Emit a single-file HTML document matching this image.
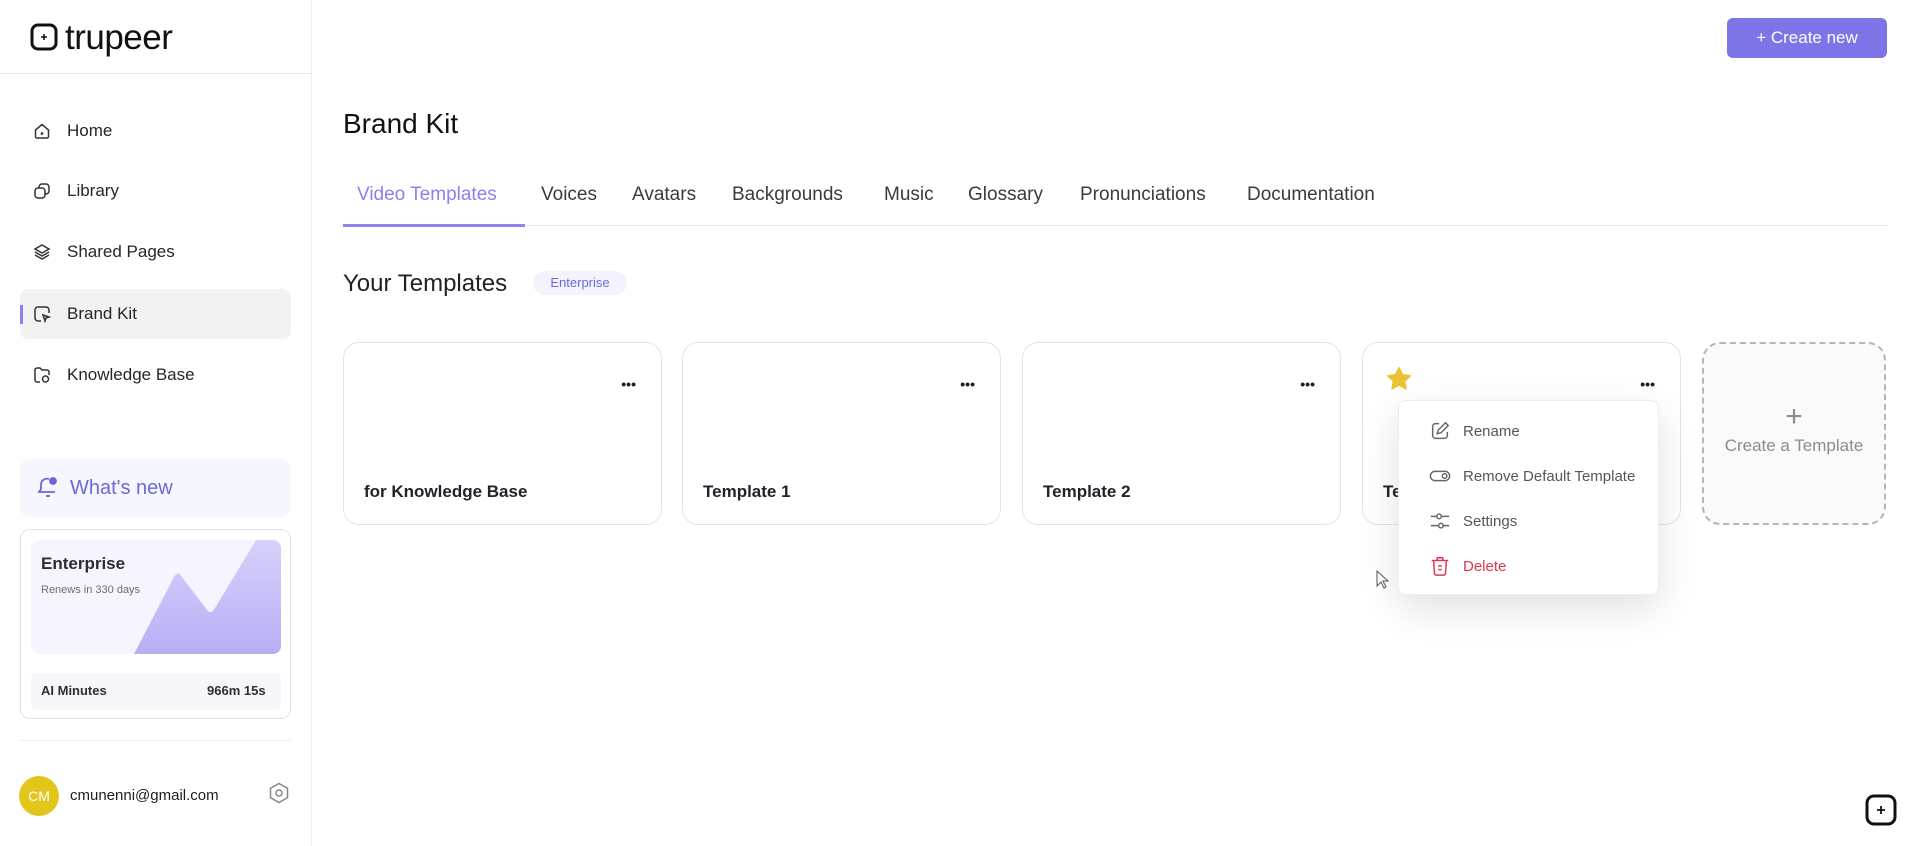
<!DOCTYPE html>
<html><head><meta charset="utf-8"><style>
*{box-sizing:border-box;margin:0;padding:0}
body{width:1920px;height:846px;overflow:hidden;background:#fff;font-family:"Liberation Sans",sans-serif;color:#1d1d22;position:relative}
.abs{position:absolute}
.side{position:absolute;left:0;top:0;width:312px;height:846px;border-right:1px solid #ececef}
.nav{position:absolute;left:20px;width:271px;height:50px;display:flex;align-items:center;font-size:17px;color:#25252b}
.nav svg{position:absolute;left:13px}
.nav span{position:absolute;left:47px}
.tab{position:absolute;top:184px;font-size:19px;color:#3a3a42}
.card{position:absolute;top:342px;width:319px;height:183px;border:1px solid #e4e4e8;border-radius:16px;background:#fff}
.card .t{position:absolute;left:20px;top:139px;font-size:17px;font-weight:bold;color:#22222a}
.dots{position:absolute;right:25px;top:36px;font-size:14px;font-weight:bold;letter-spacing:0px;line-height:10px}
.mi{position:absolute;left:30px;display:flex;align-items:center;font-size:15px;color:#55555c}
.mi svg{margin-right:12px}
</style></head><body>
<div class="side">
 <div class="abs" style="left:0;top:73px;width:312px;height:1px;background:#e8e8eb"></div>
 <svg class="abs" style="left:30px;top:23px" width="28" height="28" viewBox="0 0 28 28"><rect x="2" y="2" width="24" height="24" rx="6" fill="none" stroke="#111" stroke-width="3"/><path d="M14 11v6M11 14h6" stroke="#111" stroke-width="1.6"/></svg>
 <div class="abs" style="left:65px;top:18px;font-size:35px;letter-spacing:-0.5px;color:#111">trupeer</div>
 <div class="nav" style="top:106px"><svg width="18" height="18" viewBox="0 0 18 18" fill="none" stroke="#333" stroke-width="1.5"><path d="M2.5 8L9 2.5 15.5 8v6.5a1.5 1.5 0 0 1-1.5 1.5H4a1.5 1.5 0 0 1-1.5-1.5z"/><circle cx="9" cy="11.5" r=".6" fill="#333"/></svg><span>Home</span></div>
 <div class="nav" style="top:166px"><svg width="18" height="18" viewBox="0 0 18 18" fill="none" stroke="#333" stroke-width="1.5"><rect x="2" y="6" width="10" height="10" rx="3"/><path d="M6 6V5a3 3 0 0 1 3-3h4a3 3 0 0 1 3 3v4a3 3 0 0 1-3 3h-1"/></svg><span>Library</span></div>
 <div class="nav" style="top:227px"><svg width="18" height="18" viewBox="0 0 18 18" fill="none" stroke="#333" stroke-width="1.5"><path d="M9 2L16 6 9 10 2 6z"/><path d="M2 9l7 4 7-4M2 12l7 4 7-4"/></svg><span>Shared Pages</span></div>
 <div class="nav" style="top:289px;background:#f2f2f3;border-radius:8px"><div class="abs" style="left:0;top:16px;width:3px;height:19px;background:#8b80f0"></div><svg width="18" height="18" viewBox="0 0 18 18" fill="none" stroke="#333" stroke-width="1.5"><path d="M16 8V5a3 3 0 0 0-3-3H5a3 3 0 0 0-3 3v8a3 3 0 0 0 3 3h3"/><path d="M10 10l6 2-3 1-1 3z"/></svg><span>Brand Kit</span></div>
 <div class="nav" style="top:350px"><svg width="18" height="18" viewBox="0 0 18 18" fill="none" stroke="#333" stroke-width="1.5"><path d="M7 16H4a2 2 0 0 1-2-2V4a2 2 0 0 1 2-2h3l2 2h5a2 2 0 0 1 2 2v3"/><circle cx="12.5" cy="13" r="3"/></svg><span>Knowledge Base</span></div>
 <div class="abs" style="left:20px;top:459px;width:271px;height:58px;background:#f6f6fe;border-radius:10px"></div>
 <svg class="abs" style="left:36px;top:475px" width="24" height="24" viewBox="0 0 24 24" fill="none" stroke="#6a68d8" stroke-width="1.8"><path d="M13 4a6 6 0 0 0-8 6v4l-2 3h16"/><path d="M10 21h4"/><circle cx="17" cy="6" r="3" fill="#6a68d8"/></svg>
 <div class="abs" style="left:70px;top:477px;font-size:20px;color:#6b69d9">What's new</div>
 <div class="abs" style="left:20px;top:529px;width:271px;height:190px;border:1px solid #e2e2e6;border-radius:10px"></div>
 <div class="abs" style="left:31px;top:540px;width:250px;height:114px;background:#f6f5ff;border-radius:8px;overflow:hidden">
  <svg class="abs" style="left:0;top:0" width="250" height="114" viewBox="0 0 250 114"><defs><linearGradient id="g" x1="0" y1="0" x2="0" y2="1"><stop offset="0" stop-color="#d6d1fb"/><stop offset="1" stop-color="#b7aff5"/></linearGradient></defs><path d="M103 114L143 37Q147 30 151 37L176 70Q180 75 184 68L225 0H250V114Z" fill="url(#g)"/></svg>
  <div class="abs" style="left:10px;top:14px;font-size:17px;font-weight:bold;color:#2d2d36">Enterprise</div>
  <div class="abs" style="left:10px;top:44px;font-size:11px;color:#6b6b74">Renews in 330 days</div>
 </div>
 <div class="abs" style="left:31px;top:673px;width:250px;height:37px;background:#f6f6fb;border-radius:6px"></div>
 <div class="abs" style="left:41px;top:683px;font-size:13px;font-weight:bold;color:#2d2d36">AI Minutes</div>
 <div class="abs" style="left:207px;top:683px;font-size:13px;font-weight:bold;color:#2d2d36">966m 15s</div>
 <div class="abs" style="left:20px;top:740px;width:271px;height:1px;background:#ededf0"></div>
 <div class="abs" style="left:19px;top:776px;width:40px;height:40px;border-radius:50%;background:#e3c61c;color:#fff;font-size:14px;line-height:40px;text-align:center">CM</div>
 <div class="abs" style="left:70px;top:787px;font-size:15px;color:#1d1d22">cmunenni@gmail.com</div>
 <svg class="abs" style="left:267px;top:781px" width="24" height="24" viewBox="0 0 24 24" fill="none" stroke="#888" stroke-width="1.5"><path d="M12 2.5l8.5 4.8v9.4L12 21.5l-8.5-4.8V7.3z"/><circle cx="12" cy="12" r="3"/></svg>
</div>

<div class="abs" style="left:1727px;top:18px;width:160px;height:40px;background:#7d74e8;border-radius:6px;color:#fff;font-size:17px;line-height:40px;text-align:center">+ Create new</div>
<div class="abs" style="left:343px;top:108px;font-size:28px;color:#111">Brand Kit</div>
<div class="tab" style="left:357px;color:#8a80ef">Video Templates</div>
<div class="tab" style="left:541px">Voices</div>
<div class="tab" style="left:632px">Avatars</div>
<div class="tab" style="left:732px">Backgrounds</div>
<div class="tab" style="left:884px">Music</div>
<div class="tab" style="left:968px">Glossary</div>
<div class="tab" style="left:1080px">Pronunciations</div>
<div class="tab" style="left:1247px">Documentation</div>
<div class="abs" style="left:343px;top:225px;width:1544px;height:1px;background:#e8e8eb"></div>
<div class="abs" style="left:343px;top:224px;width:182px;height:3px;background:#8f85f0"></div>
<div class="abs" style="left:343px;top:270px;font-size:24px;color:#222">Your Templates</div>
<div class="abs" style="left:533px;top:271px;width:94px;height:24px;background:#f4f3fd;border-radius:12px;color:#6b6adb;font-size:13px;line-height:24px;text-align:center">Enterprise</div>

<div class="card" style="left:343px"><div class="dots">•••</div><div class="t">for Knowledge Base</div></div>
<div class="card" style="left:682px"><div class="dots">•••</div><div class="t">Template 1</div></div>
<div class="card" style="left:1022px"><div class="dots">•••</div><div class="t">Template 2</div></div>
<div class="card" style="left:1362px"><div class="dots">•••</div><div class="t">Template 3</div>
 <svg class="abs" style="left:22px;top:22px" width="28" height="28" viewBox="0 0 24 24"><path d="M12 2.5l2.9 6 6.6.8-4.9 4.5 1.3 6.5L12 17l-5.9 3.3 1.3-6.5L2.5 9.3l6.6-.8z" fill="#ecc232" stroke="#ecc232" stroke-linejoin="round" stroke-width="1.5"/></svg>
</div>
<div class="abs" style="left:1702px;top:342px;width:184px;height:183px;border:2px dashed #b5b5ba;border-radius:18px;background:#fafafa;text-align:center;color:#8b8b92">
 <div style="font-size:30px;margin-top:56px;font-weight:300">+</div>
 <div style="font-size:17px;margin-top:2px">Create a Template</div>
</div>

<div class="abs" style="left:1398px;top:400px;width:261px;height:195px;background:#fff;border:1px solid #ededf0;border-radius:8px;box-shadow:0 14px 40px rgba(0,0,0,.12)">
 <div class="mi" style="top:19px"><svg width="22" height="22" viewBox="0 0 24 24" fill="none" stroke="#666" stroke-width="1.6"><path d="M11 4H7a3 3 0 0 0-3 3v10a3 3 0 0 0 3 3h10a3 3 0 0 0 3-3v-4"/><path d="M18 3l3 3-8 8-4 1 1-4z"/></svg>Rename</div>
 <div class="mi" style="top:64px"><svg width="22" height="22" viewBox="0 0 24 24" fill="none" stroke="#666" stroke-width="1.6"><rect x="1.5" y="7" width="21" height="10" rx="5"/><circle cx="17" cy="12" r="2.5"/></svg>Remove Default Template</div>
 <div class="mi" style="top:109px"><svg width="22" height="22" viewBox="0 0 24 24" fill="none" stroke="#666" stroke-width="1.6"><path d="M2 7h6M14 7h8M2 17h8M16 17h6"/><circle cx="11" cy="7" r="2.5"/><circle cx="13" cy="17" r="2.5"/></svg>Settings</div>
 <div class="mi" style="top:154px;color:#e0354e"><svg width="22" height="22" viewBox="0 0 24 24" fill="none" stroke="#e0354e" stroke-width="1.6"><path d="M3 6h18M9 6V3h6v3M5 6l1 14a2 2 0 0 0 2 2h8a2 2 0 0 0 2-2l1-14M10 12h4M10 16h4"/></svg>Delete</div>
</div>
<svg class="abs" style="left:1376px;top:570px" width="14" height="20" viewBox="0 0 14 20"><path d="M1 1v15l4-4 3 6 2-1-3-6h5z" fill="#fff" stroke="#555"/></svg>
<svg class="abs" style="left:1864px;top:793px" width="34" height="34" viewBox="0 0 34 34"><rect x="3" y="3" width="28" height="28" rx="7" fill="#fff" stroke="#111" stroke-width="3"/><path d="M17 13v8M13 17h8" stroke="#111" stroke-width="1.8"/></svg>
</body></html>
